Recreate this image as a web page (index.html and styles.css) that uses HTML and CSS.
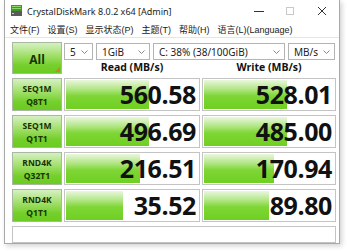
FILE: index.html
```html
<!DOCTYPE html>
<html>
<head>
<meta charset="utf-8">
<link rel="stylesheet" href="styles.css">
</head>
<body>
<div class="window">
  <div class="titlebar">
    <svg class="appicon" width="11" height="11" viewBox="0 0 11 11">
      <rect x="0" y="0" width="11" height="6" fill="#3f9a2a"/>
      <rect x="1" y="1" width="9" height="1" fill="#8fd46a"/>
      <rect x="1" y="3" width="9" height="1" fill="#8fd46a"/>
      <rect x="0" y="6" width="11" height="5" fill="#5a5a5a"/>
      <rect x="1" y="8" width="2" height="1" fill="#d0d0d0"/>
    </svg>
    <span class="title">CrystalDiskMark 8.0.2 x64 [Admin]</span>
    <div class="controls">
      <span class="ctl min"><svg width="10" height="10" viewBox="0 0 10 10"><line x1="0" y1="5.5" x2="10" y2="5.5" stroke="#333" stroke-width="1"/></svg></span>
      <span class="ctl max"><svg width="10" height="10" viewBox="0 0 10 10"><rect x="1.5" y="1.5" width="7" height="7" fill="none" stroke="#c8c8c8" stroke-width="1"/></svg></span>
      <span class="ctl close"><svg width="10" height="10" viewBox="0 0 10 10"><path d="M1 1L9 9M9 1L1 9" stroke="#333" stroke-width="1"/></svg></span>
    </div>
  </div>
  <div class="menubar">
    <span>文件(F)</span>
    <span>设置(S)</span>
    <span>显示状态(P)</span>
    <span>主题(T)</span>
    <span>帮助(H)</span>
    <span>语言(L)(Language)</span>
  </div>
  <div class="main">
    <div class="top">
      <div class="allbtn">All<span class="corner"></span></div>
      <div class="selects">
        <div class="sel s1"><span>5</span><svg class="chev" width="7" height="4" viewBox="0 0 7 4"><path d="M0.5 0.5L3.5 3.5L6.5 0.5" fill="none" stroke="#888" stroke-width="1"/></svg></div>
        <div class="sel s2"><span>1GiB</span><svg class="chev" width="7" height="4" viewBox="0 0 7 4"><path d="M0.5 0.5L3.5 3.5L6.5 0.5" fill="none" stroke="#888" stroke-width="1"/></svg></div>
        <div class="sel s3"><span>C: 38% (38/100GiB)</span><svg class="chev" width="7" height="4" viewBox="0 0 7 4"><path d="M0.5 0.5L3.5 3.5L6.5 0.5" fill="none" stroke="#888" stroke-width="1"/></svg></div>
        <div class="sel s4"><span>MB/s</span><svg class="chev" width="7" height="4" viewBox="0 0 7 4"><path d="M0.5 0.5L3.5 3.5L6.5 0.5" fill="none" stroke="#888" stroke-width="1"/></svg></div>
      </div>
      <div class="hdr hread">Read (MB/s)</div>
      <div class="hdr hwrite">Write (MB/s)</div>
    </div>

    <div class="row">
      <div class="label">SEQ1M<br>Q8T1</div>
      <div class="val"><div class="fill" style="width:83px"></div><span>560.58</span></div>
      <div class="val"><div class="fill" style="width:83px"></div><span>528.01</span></div>
    </div>
    <div class="row">
      <div class="label">SEQ1M<br>Q1T1</div>
      <div class="val"><div class="fill" style="width:83px"></div><span>496.69</span></div>
      <div class="val"><div class="fill" style="width:83px"></div><span>485.00</span></div>
    </div>
    <div class="row">
      <div class="label">RND4K<br>Q32T1</div>
      <div class="val"><div class="fill" style="width:74px"></div><span>216.51</span></div>
      <div class="val"><div class="fill" style="width:70px"></div><span>170.94</span></div>
    </div>
    <div class="row">
      <div class="label">RND4K<br>Q1T1</div>
      <div class="val"><div class="fill" style="width:57px"></div><span>35.52</span></div>
      <div class="val"><div class="fill" style="width:65px"></div><span>89.80</span></div>
    </div>
    <div class="status"></div>
  </div>
</div>
</body>
</html>
```
FILE: styles.css
```css
html, body {
  margin: 0;
  padding: 0;
}
body {
  width: 347px;
  height: 251px;
  background: #ffffff;
  overflow: hidden;
  font-family: "Noto Sans", "Noto Sans CJK SC", sans-serif;
}
.window {
  margin-left: 4px;
  width: 336px;
  height: 244px;
  box-sizing: border-box;
  border: 1px solid #a8a8a8;
  border-top: none;
  background: #ffffff;
  box-shadow: 2px 2px 5px rgba(0,0,0,0.18);
  display: flex;
  flex-direction: column;
}
.titlebar {
  height: 22px;
  display: flex;
  align-items: center;
  padding-left: 6px;
  background: #ffffff;
}
.appicon {
  display: block;
  margin-top: -1px;
}
.title {
  margin-left: 5px;
  font-size: 9px;
  color: #222;
  font-family: "Noto Sans", sans-serif;
}
.controls {
  margin-left: auto;
  display: flex;
  align-items: center;
}
.ctl {
  width: 31px;
  height: 22px;
  display: flex;
  align-items: center;
  justify-content: center;
}
.ctl svg { display: block; }
.close { width: 34px; }
.menubar {
  height: 16px;
  display: flex;
  align-items: center;
  gap: 8px;
  padding-left: 5px;
  font-size: 9px;
  color: #222;
  font-family: "Liberation Sans", "Noto Sans CJK SC", sans-serif;
  border-bottom: 1px solid #e6e6e6;
  box-sizing: border-box;
}
.main {
  flex: 1;
  padding: 4px 3px 0 7px;
  display: flex;
  flex-direction: column;
  gap: 4px;
}
.top {
  display: grid;
  grid-template-columns: 50px 136px 134px;
  grid-template-rows: 18px 13px;
  column-gap: 2px;
  row-gap: 1px;
}
.allbtn {
  grid-column: 1;
  grid-row: 1 / 3;
  position: relative;
  box-sizing: border-box;
  border: 1px solid #a9b8a0;
  background: linear-gradient(#d6f1c2 0%, #a3e06e 40%, #74cf2a 75%, #6ccb22 100%);
  display: flex;
  align-items: center;
  justify-content: center;
  font-weight: bold;
  font-size: 12px;
  color: #173300;
  font-family: "Open Sans", sans-serif;
  padding-top: 3px;
}
.corner {
  position: absolute;
  right: 1px;
  bottom: 1px;
  width: 0;
  height: 0;
  border-left: 5px solid transparent;
  border-bottom: 5px solid #e0762a;
}
.selects {
  grid-column: 2 / 4;
  grid-row: 1;
  display: flex;
  gap: 3px;
  padding-top: 1px;
}
.sel {
  height: 17px;
  box-sizing: border-box;
  border: 1px solid #b4b4b4;
  background: #fff;
  display: flex;
  align-items: center;
  padding: 0 4px 0 5px;
  font-size: 10px;
  color: #222;
  font-family: "Noto Sans", sans-serif;
}
.sel span { flex: 1; }
.chev { display: block; }
.s1 { width: 29px; }
.s2 { width: 54px; }
.s3 { width: 132px; }
.s4 { width: 47px; }
.hdr {
  grid-row: 2;
  text-align: center;
  font-weight: bold;
  font-size: 10.5px;
  line-height: 13px;
  color: #111;
  font-family: "Open Sans", sans-serif;
}
.hread { grid-column: 2; }
.hwrite { grid-column: 3; }
.row {
  display: grid;
  grid-template-columns: 50px 136px 134px;
  column-gap: 2px;
  height: 33px;
}
.label {
  box-sizing: border-box;
  border: 1px solid #a9b8a0;
  background: linear-gradient(#d6f1c2 0%, #a3e06e 40%, #74cf2a 75%, #6ccb22 100%);
  display: flex;
  align-items: center;
  justify-content: center;
  text-align: center;
  font-weight: bold;
  font-size: 8.5px;
  line-height: 13px;
  color: #173300;
  font-family: "Open Sans", sans-serif;
}
.val {
  position: relative;
  box-sizing: border-box;
  border: 1px solid #c4c4c4;
  background: #fff;
  display: flex;
  align-items: center;
  justify-content: flex-end;
}
.fill {
  position: absolute;
  left: 1px;
  top: 1px;
  bottom: 1px;
  background: linear-gradient(#eaf7de 0%, #b5e78a 30%, #7fd636 55%, #6fcf22 100%);
}
.val span {
  position: relative;
  font-weight: bold;
  font-size: 25px;
  color: #111;
  font-family: "Open Sans", sans-serif;
  padding-right: 3px;
  letter-spacing: -0.4px;
  line-height: 1;
}
.status {
  height: 17px;
  box-sizing: border-box;
  border: 1px solid #c4c4c4;
  background: #fff;
  width: 324px;
}
```
